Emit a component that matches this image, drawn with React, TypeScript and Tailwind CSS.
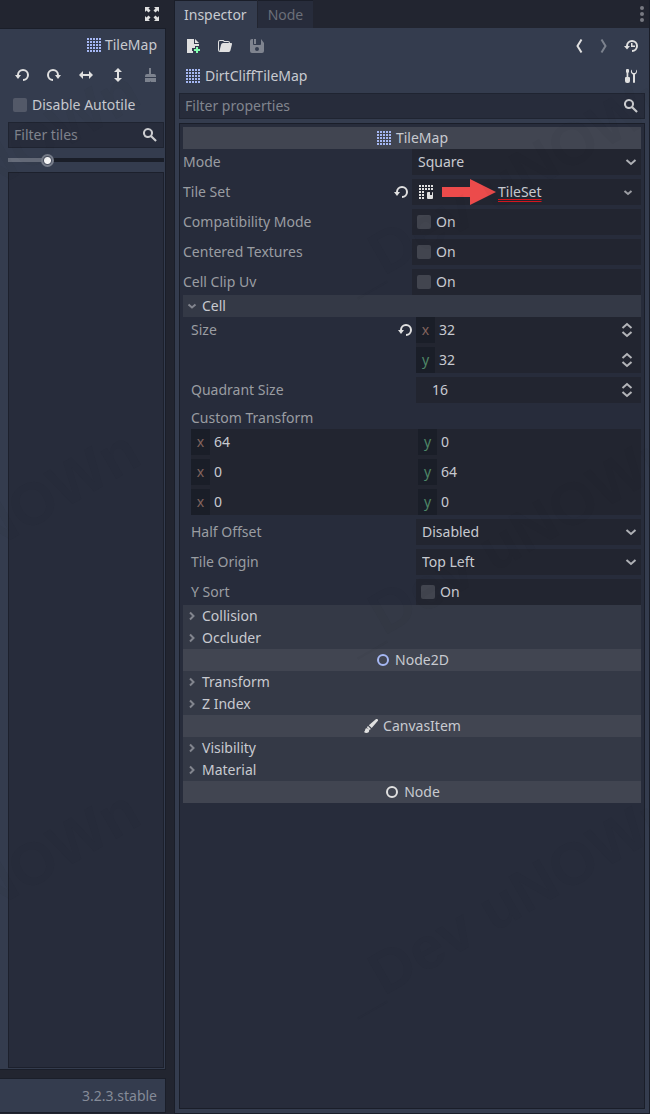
import React, { useId, useState } from "react";

type IconProps = { className?: string; children: React.ReactNode };

function Icon({ className = "text-[#e0e0e0]", children }: IconProps) {
  return (
    <svg viewBox="0 0 16 16" fill="currentColor" aria-hidden="true" className={`h-4 w-4 shrink-0 ${className}`}>
      {children}
    </svg>
  );
}

const CELLS = [1, 4, 7, 10, 13];

const TileMapIcon = () => (
  <Icon className="text-[#a5b7f3]">
    {CELLS.map((y) => CELLS.map((x) => <rect key={`${x}-${y}`} x={x} y={y} width="2" height="2" />))}
  </Icon>
);

const TileSetIcon = () => (
  <Icon>
    {CELLS.map((y) =>
      CELLS.filter((x) => y < 7 || x < 7).map((x) => <rect key={`${x}-${y}`} x={x} y={y} width="2" height="2" />),
    )}
    <path d="M10 8h2v3h2V8a1 1 0 0 1 1 1v5a1 1 0 0 1-1 1h-4a1 1 0 0 1-1-1V9a1 1 0 0 1 1-1z" />
  </Icon>
);

const REVERT = "M9 2a6 6 0 0 0-6 6H1l3 4 3-4H5a4 4 0 1 1 4 4v2A6 6 0 1 0 9 2z";

const RevertIcon = () => (
  <Icon>
    <path d={REVERT} />
  </Icon>
);

const RotateRightIcon = () => (
  <Icon>
    <path d="M7 2a6 6 0 0 1 6 6h2l-3 4-3-4h2a4 4 0 1 0-4 4v2A6 6 0 1 1 7 2z" />
  </Icon>
);

const FlipXIcon = () => (
  <Icon>
    <path d="M5 4 1 8l4 4V9h6v3l4-4-4-4v3H5z" />
  </Icon>
);

const FlipYIcon = () => (
  <Icon>
    <path d="m8 1-4 4h3v6H4l4 4 4-4H9V5h3z" />
  </Icon>
);

const ClearIcon = () => (
  <Icon className="text-[#7c828e]">
    <path d="M7 1h2v6h3a2 2 0 0 1 2 2v1H3V9a2 2 0 0 1 2-2h2zM3 11h11v4H9v-1l-1 1H3z" />
  </Icon>
);

const ExpandIcon = () => (
  <Icon>
    <path d="M1 1h5L4.500 2.500l2 2-2 2-2-2L1 6zM15 1v5l-1.500-1.500-2 2-2-2 2-2L10 1zM1 15v-5l1.500 1.500 2-2 2 2-2 2L6 15zM15 15h-5l1.500-1.500-2-2 2-2 2 2L15 10z" />
  </Icon>
);

const SearchIcon = () => (
  <Icon className="text-[#cccdd0]">
    <path d="M6 1a5 5 0 1 0 2.700 9.200l4.600 4.600 1.500-1.500-4.600-4.600A5 5 0 0 0 6 1zm0 2a3 3 0 1 1 0 6 3 3 0 0 1 0-6z" />
  </Icon>
);

const NewFileIcon = () => (
  <Icon>
    <path d="M2 1v14h6v-2H7v-3h3V8h4V6H9V1zm8 0v4h4z" />
    <path d="M11 9h2v2h2v2h-2v2h-2v-2H9v-2h2z" fill="#84ffb1" />
  </Icon>
);

const FolderIcon = () => (
  <Icon>
    <path d="M3 2a2 2 0 0 0-2 2v8a2 2 0 0 0 2 2h8.500c.9 0 1.700-.6 1.900-1.500L15 6.200c.1-.7-.3-1.200-1-1.200h-1a2 2 0 0 0-2-2H7.500L6.500 2zm0 1h3l1 1h4a1 1 0 0 1 1 1H6a2 2 0 0 0-1.900 1.500L2.500 13A1 1 0 0 1 2 12V4a1 1 0 0 1 1-1z" />
  </Icon>
);

const SaveIcon = () => (
  <Icon className="text-[#7f848f]">
    <path
      fillRule="evenodd"
      d="M3 1a2 2 0 0 0-2 2v10a2 2 0 0 0 2 2h10a2 2 0 0 0 2-2V5l-3-4v5a1 1 0 0 1-1 1H5a1 1 0 0 1-1-1V1zM5 1h2v5H5zm3 8a2 2 0 1 0 0 4 2 2 0 0 0 0-4z"
    />
  </Icon>
);

const BackIcon = () => (
  <Icon>
    <path d="m10.500 1.500-4 6.500 4 6.500" fill="none" stroke="currentColor" strokeWidth="2" />
  </Icon>
);

const ForwardIcon = () => (
  <Icon className="text-[#7c828e]">
    <path d="m6.500 1.500 4 6.500-4 6.500" fill="none" stroke="currentColor" strokeWidth="2" />
  </Icon>
);

const HistoryIcon = () => (
  <Icon>
    <path d="M9 2a6 6 0 0 0-6 6H1l3 3.500L7 8H5a4 4 0 1 1 4 4v2A6 6 0 1 0 9 2zM8 5v4h4V7.500H9.500V5z" />
  </Icon>
);

const ToolsIcon = () => (
  <Icon>
    <path d="M4 1a1 1 0 0 0-1 1v2l.6 1v4H3a1 1 0 0 0-1 1v3a2 2 0 0 0 2 2h1a2 2 0 0 0 2-2v-3a1 1 0 0 0-1-1h-.7V5L6 4V2a1 1 0 0 0-1-1zM9 1.500a3 3 0 0 0-.1 4.300c.3.300.7.500 1.100.700V14a1 1 0 0 0 2 0V6.500a3 3 0 0 0 1-5V4l-1 1h-2L9 4z" />
  </Icon>
);

const DotsIcon = () => (
  <Icon className="text-[#787a82]">
    <circle cx="9" cy="2" r="2" />
    <circle cx="9" cy="8" r="2" />
    <circle cx="9" cy="14" r="2" />
  </Icon>
);

const RingIcon = ({ className }: { className?: string }) => (
  <Icon className={className}>
    <circle cx="8" cy="8" r="5" fill="none" stroke="currentColor" strokeWidth="2" />
  </Icon>
);

const BrushIcon = () => (
  <Icon>
    <path d="M14.600 1.300c-.5-.5-1.300-.5-1.800 0L5.800 7.200 8.700 10.100l6-7c.5-.5.4-1.300-.1-1.800zM5 8 3.800 9.300l2.800 2.800L7.900 10.900zM3.500 10.200C1.800 10.200 2.500 13 1 14c1.500 1.500 5 1.300 5.200-1.200.1-1.500-1-2.600-2.700-2.600z" />
  </Icon>
);

const ChevronDown = ({ className = "text-[#aeb0b5]" }: { className?: string }) => (
  <svg viewBox="0 0 12 12" aria-hidden="true" className={`h-3 w-3 shrink-0 ${className}`}>
    <path d="m1.500 4 4.500 4 4.500-4" fill="none" stroke="currentColor" strokeWidth="2" />
  </svg>
);

const SmallChevron = ({ open }: { open: boolean }) => (
  <svg viewBox="0 0 10 10" aria-hidden="true" className="h-2.5 w-2.5 shrink-0 text-[#82858e]">
    <path d={open ? "m1.500 3.500 3.500 3 3.500-3" : "m3 1.500 3.500 3.500L3 8.500"} fill="none" stroke="currentColor" strokeWidth="2" />
  </svg>
);

function FilterBox({ label }: { label: string }) {
  return (
    <div className="flex h-[26px] items-center border border-[#1f2431] bg-[#272c3b] px-[5px]">
      <input
        type="text"
        aria-label={label}
        placeholder={label}
        className="w-0 flex-1 bg-transparent text-[#c8cad0] outline-none placeholder:text-[#81858e]"
      />
      <SearchIcon />
    </div>
  );
}

function Check({ id, className = "bg-[#42454f]" }: { id: string; className?: string }) {
  return <input id={id} type="checkbox" className={`h-3.5 w-3.5 shrink-0 appearance-none rounded-xs ${className}`} />;
}

function Property({
  label,
  id,
  revert,
  children,
}: {
  label: string;
  id: string;
  revert?: boolean;
  children: React.ReactNode;
}) {
  return (
    <div className="grid grid-cols-2">
      <div className="flex h-[26px] items-center justify-between pr-[3px]">
        <label htmlFor={id} className="text-[#9a9da2]">
          {label}
        </label>
        {revert && (
          <button type="button" aria-label={`Revert ${label}`}>
            <RevertIcon />
          </button>
        )}
      </div>
      <div className="bg-[#222530]">{children}</div>
    </div>
  );
}

function SelectProperty({ label, options }: { label: string; options: string[] }) {
  const id = useId();
  return (
    <Property label={label} id={id}>
      <div className="relative flex h-[26px] items-center">
        <select id={id} className="h-full w-full appearance-none bg-transparent pr-6 pl-1.5 outline-none">
          {options.map((option) => (
            <option key={option}>{option}</option>
          ))}
        </select>
        <span className="pointer-events-none absolute right-1">
          <ChevronDown />
        </span>
      </div>
    </Property>
  );
}

function CheckProperty({ label }: { label: string }) {
  const id = useId();
  return (
    <Property label={label} id={id}>
      <label className="flex h-[26px] items-center gap-[5px] pl-[5px]">
        <Check id={id} />
        On
      </label>
    </Property>
  );
}

function NumberField({
  id,
  name,
  axis,
  value,
  spin,
}: {
  id?: string;
  name: string;
  axis?: "x" | "y";
  value: string;
  spin?: boolean;
}) {
  return (
    <div className="flex h-[26px] items-center">
      {axis && (
        <span
          className={`flex h-full w-[19px] items-center justify-center bg-[#1a1e28] ${axis === "x" ? "text-[#82635d]" : "text-[#4f8767]"}`}
        >
          {axis}
        </span>
      )}
      <input
        id={id}
        type="text"
        aria-label={name}
        defaultValue={value}
        className={`w-0 flex-1 bg-transparent outline-none ${axis ? "pl-1" : "pl-4"}`}
      />
      {spin && (
        <button type="button" aria-label={`Step ${name}`} className="mr-1.5">
          <Icon className="text-[#b3b4b8]">
            <path d="m3.500 6 4.500-4 4.500 4M3.500 10l4.500 4 4.500-4" fill="none" stroke="currentColor" strokeWidth="2" />
          </Icon>
        </button>
      )}
    </div>
  );
}

function Category({ icon, title }: { icon: React.ReactNode; title: string }) {
  return (
    <h2 className="flex h-[22px] items-center justify-center gap-1 bg-[#414551]">
      {icon}
      {title}
    </h2>
  );
}

function Section({ title, children }: { title: string; children?: React.ReactNode }) {
  const [open, setOpen] = useState(Boolean(children));
  return (
    <section>
      <button
        type="button"
        aria-expanded={open}
        onClick={() => setOpen(!open)}
        className="flex h-[22px] w-full items-center gap-[5px] bg-[#343946] pl-1"
      >
        <SmallChevron open={open} />
        {title}
      </button>
      {open && children}
    </section>
  );
}

const TRANSFORM = [
  ["64", "0"],
  ["0", "64"],
  ["0", "0"],
];

function TilePanel() {
  const autotile = useId();
  return (
    <aside className="flex w-[174px] shrink-0 flex-col pr-2">
      <div className="flex h-7 items-center justify-end pr-1.5">
        <button type="button" aria-label="Distraction free mode">
          <ExpandIcon />
        </button>
      </div>
      <div className="flex flex-1 flex-col border-y border-r border-[#1a1e29] bg-[#343c4e]">
        <button type="button" className="mt-1.5 mr-2 flex h-5 items-center gap-[3px] self-end">
          <TileMapIcon />
          TileMap
        </button>
        <div className="mt-3 flex justify-end gap-4 pr-[7px]">
          <button type="button" aria-label="Rotate left">
            <RevertIcon />
          </button>
          <button type="button" aria-label="Rotate right">
            <RotateRightIcon />
          </button>
          <button type="button" aria-label="Flip horizontally">
            <FlipXIcon />
          </button>
          <button type="button" aria-label="Flip vertically">
            <FlipYIcon />
          </button>
          <button type="button" aria-label="Clear transform">
            <ClearIcon />
          </button>
        </div>
        <label htmlFor={autotile} className="mt-3 flex h-5 items-center gap-[5px] pl-[13px]">
          <Check id={autotile} className="bg-[#535968]" />
          Disable Autotile
        </label>
        <div className="mt-[7px] mr-px ml-2">
          <FilterBox label="Filter tiles" />
        </div>
        <div className="mt-[5px] mr-px ml-2 flex h-[14px] items-center">
          <input
            type="range"
            aria-label="Tile zoom"
            min="0"
            max="100"
            defaultValue="23"
            className="h-1 w-full appearance-none bg-[linear-gradient(to_right,#666c7a_26%,#1a1e28_26%)] outline-none [&::-webkit-slider-thumb]:h-[13px] [&::-webkit-slider-thumb]:w-[13px] [&::-webkit-slider-thumb]:appearance-none [&::-webkit-slider-thumb]:rounded-full [&::-webkit-slider-thumb]:border-2 [&::-webkit-slider-thumb]:border-[#777d8a] [&::-webkit-slider-thumb]:bg-[radial-gradient(circle,#f4f4f5_3px,#4a5060_4px)]"
          />
        </div>
        <div className="mt-[5px] mr-px mb-px ml-2 flex-1 border border-[#1c202c] bg-[#272c3b]" />
      </div>
      <footer className="mt-2 mb-px flex h-[35px] items-center justify-end border border-l-0 border-[#1a1e29] bg-[#343c4e] pr-2 text-[#858b98]">
        3.2.3.stable
      </footer>
    </aside>
  );
}

function Inspector() {
  const tileSet = useId();
  const size = useId();
  const quadrant = useId();
  return (
    <main className="flex min-w-0 flex-1 flex-col border-r border-l border-[#1a1e29]">
      <div className="flex h-7 items-start justify-between">
        <div role="tablist" className="flex h-full gap-px">
          <button
            type="button"
            role="tab"
            aria-selected="true"
            className="border-t border-[#1a1e29] bg-[#343c4e] pr-2.5 pl-[9px]"
          >
            Inspector
          </button>
          <button
            type="button"
            role="tab"
            aria-selected="false"
            className="border-t border-[#1a1e29] bg-[#272c3b] px-2.5 text-[#6b6f79]"
          >
            Node
          </button>
        </div>
        <button type="button" aria-label="Dock menu" className="mt-1.5">
          <DotsIcon />
        </button>
      </div>
      <div className="flex flex-1 flex-col border-b border-[#1a1e29] bg-[#343c4e] px-1 pb-1">
        <div className="flex h-9 items-center justify-between px-1.5">
          <div className="flex gap-4">
            <button type="button" aria-label="New resource">
              <NewFileIcon />
            </button>
            <button type="button" aria-label="Load resource">
              <FolderIcon />
            </button>
            <button type="button" aria-label="Save resource" disabled>
              <SaveIcon />
            </button>
          </div>
          <div className="flex gap-2">
            <button type="button" aria-label="Previous object">
              <BackIcon />
            </button>
            <button type="button" aria-label="Next object">
              <ForwardIcon />
            </button>
            <button type="button" aria-label="History" className="ml-1">
              <HistoryIcon />
            </button>
          </div>
        </div>
        <div className="flex h-6 items-center justify-between px-1.5">
          <button type="button" className="flex items-center gap-1">
            <TileMapIcon />
            DirtCliffTileMap
          </button>
          <button type="button" aria-label="Object tools">
            <ToolsIcon />
          </button>
        </div>
        <div className="mt-[5px]">
          <FilterBox label="Filter properties" />
        </div>
        <div className="mt-1 flex-1 border border-[#1a1e29] bg-[#272c3b] p-[3px]">
          <Category icon={<TileMapIcon />} title="TileMap" />
          <div className="flex flex-col gap-1">
            <SelectProperty label="Mode" options={["Square", "Isometric", "Custom"]} />
            <Property label="Tile Set" id={tileSet} revert>
              <div className="flex h-[26px] items-center pr-2 pl-1.5">
                <TileSetIcon />
                <svg viewBox="0 0 54 26" aria-hidden="true" className="ml-2 h-[26px] w-[54px] shrink-0 text-[#ec4b4b]">
                  <path d="M0 8h28V0l26 13-26 13v-8H0z" fill="currentColor" />
                </svg>
                <button id={tileSet} type="button" className="ml-[2px] flex flex-1 items-center justify-between">
                  <span className="underline decoration-[#d5161e] decoration-double decoration-1 underline-offset-2">TileSet</span>
                  <svg viewBox="0 0 10 10" aria-hidden="true" className="h-2.5 w-2.5 text-[#9b9da3]">
                    <path d="m1.500 4 3.500 3 3.500-3" fill="none" stroke="currentColor" strokeWidth="2" />
                  </svg>
                </button>
              </div>
            </Property>
            <CheckProperty label="Compatibility Mode" />
            <CheckProperty label="Centered Textures" />
            <CheckProperty label="Cell Clip Uv" />
          </div>
          <Section title="Cell">
            <div className="flex flex-col gap-1 pl-2">
              <Property label="Size" id={size} revert>
                <div className="flex flex-col gap-1">
                  <NumberField id={size} name="Size x" axis="x" value="32" spin />
                  <NumberField name="Size y" axis="y" value="32" spin />
                </div>
              </Property>
              <Property label="Quadrant Size" id={quadrant}>
                <NumberField id={quadrant} name="Quadrant Size" value="16" spin />
              </Property>
              <div>
                <h3 className="flex h-[22px] items-center text-[#9a9da2]">Custom Transform</h3>
                <div className="grid grid-cols-2 gap-1 bg-[#222530]">
                  {TRANSFORM.map(([x, y], row) => (
                    <React.Fragment key={row}>
                      <NumberField name={`Transform ${row} x`} axis="x" value={x} />
                      <NumberField name={`Transform ${row} y`} axis="y" value={y} />
                    </React.Fragment>
                  ))}
                </div>
              </div>
              <SelectProperty label="Half Offset" options={["Disabled", "Offset X", "Offset Y"]} />
              <SelectProperty label="Tile Origin" options={["Top Left", "Center", "Bottom Left"]} />
              <CheckProperty label="Y Sort" />
            </div>
          </Section>
          <Section title="Collision" />
          <Section title="Occluder" />
          <Category icon={<RingIcon className="text-[#a5b7f3]" />} title="Node2D" />
          <Section title="Transform" />
          <Section title="Z Index" />
          <Category icon={<BrushIcon />} title="CanvasItem" />
          <Section title="Visibility" />
          <Section title="Material" />
          <Category icon={<RingIcon />} title="Node" />
        </div>
      </div>
    </main>
  );
}

// Faint diagonal mark, tiled every 540 by 360 pixels.
function Watermark() {
  return (
    <svg aria-hidden="true" className="pointer-events-none absolute inset-0 h-full w-full" fill="#101820" fillOpacity="0.03">
      {[-185, 355].map((x) =>
        [293, 653, 1013].map((y) => (
          <text
            key={`${x}-${y}`}
            transform={`translate(${x} ${y}) rotate(-30)`}
            fontFamily="Liberation Sans, sans-serif"
            fontWeight="bold"
            fontSize="60"
          >
            _Dev uNOWn
          </text>
        )),
      )}
    </svg>
  );
}

export default function App() {
  return (
    <div className="relative flex min-h-screen overflow-hidden bg-[#222530] font-['Noto_Sans',sans-serif] text-sm leading-5 text-[#c8cad0]">
      <TilePanel />
      <Inspector />
      <Watermark />
    </div>
  );
}
